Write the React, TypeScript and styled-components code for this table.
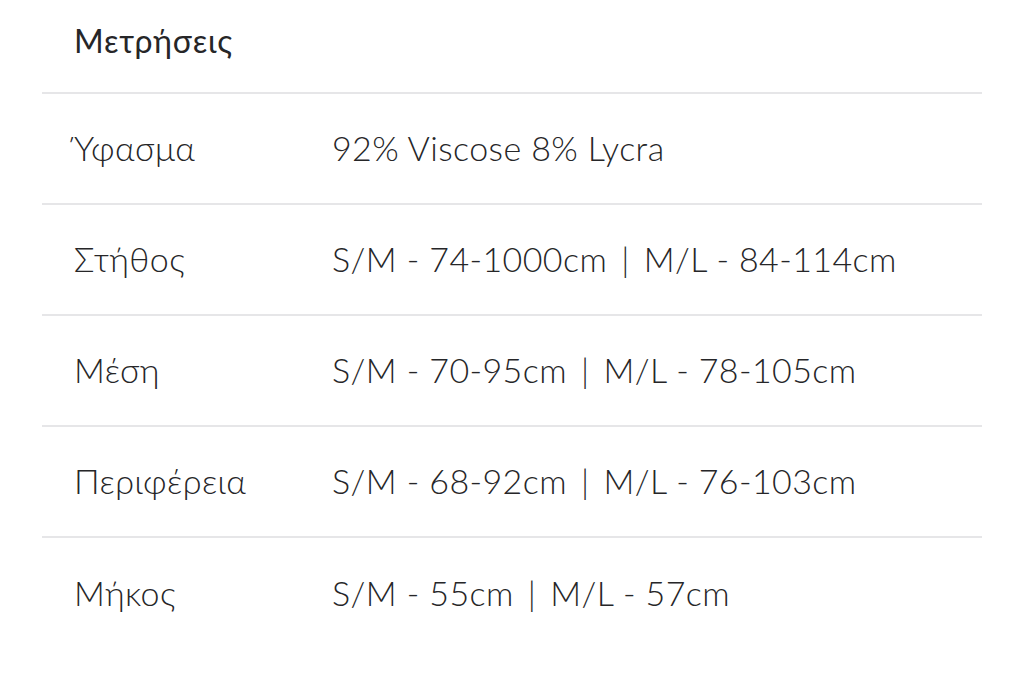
import React from 'react';
import styled, { createGlobalStyle } from 'styled-components';

interface Measurement {
  label: string;
  sizes: string[];
}

const measurements: Measurement[] = [
  { label: 'Ύφασμα', sizes: ['92% Viscose 8% Lycra'] },
  { label: 'Στήθος', sizes: ['S/M - 74-1000cm', 'M/L - 84-114cm'] },
  { label: 'Μέση', sizes: ['S/M - 70-95cm', 'M/L - 78-105cm'] },
  { label: 'Περιφέρεια', sizes: ['S/M - 68-92cm', 'M/L - 76-103cm'] },
  { label: 'Μήκος', sizes: ['S/M - 55cm', 'M/L - 57cm'] },
];

const GlobalStyle = createGlobalStyle`
  html, body {
    margin: 0;
    padding: 0;
    background: #ffffff;
  }
  body {
    font-family: Lato, "Noto Sans", "DejaVu Sans", sans-serif;
    color: #262628;
  }
`;

const Page = styled.div`
  width: 1024px;
  height: 689px;
  padding: 0 42px;
  box-sizing: border-box;
  overflow: hidden;
`;

const Heading = styled.h2`
  margin: 0;
  height: 94px;
  display: flex;
  align-items: center;
  padding: 0 0 11px 32px;
  font-size: 32px;
  font-weight: 400;
  letter-spacing: 0.8px;
  border-bottom: 2px solid #e6e6e8;
  box-sizing: border-box;
`;

const Table = styled.div`
  display: flex;
  flex-direction: column;
`;

const Row = styled.div<{ $last?: boolean }>`
  display: grid;
  grid-template-columns: 258px 1fr;
  align-items: center;
  height: 111px;
  padding: 0 0 2px 32px;
  box-sizing: border-box;
  border-bottom: ${(p) => (p.$last ? 'none' : '2px solid #e6e6e8')};
  font-size: 34px;
  font-weight: 300;
  letter-spacing: 0.4px;
`;

const Label = styled.span`
  white-space: nowrap;
`;

const Value = styled.span`
  white-space: nowrap;
`;

const Divider = styled.span`
  margin: 0 14px;
`;

const App: React.FC = () => {
  return (
    <>
      <GlobalStyle />
      <Page>
        <Heading>Μετρήσεις</Heading>
        <Table>
          {measurements.map((m, i) => (
            <Row key={m.label} $last={i === measurements.length - 1}>
              <Label>{m.label}</Label>
              <Value>
                {m.sizes.map((s, j) => (
                  <React.Fragment key={s}>
                    {j > 0 && <Divider>|</Divider>}
                    {s}
                  </React.Fragment>
                ))}
              </Value>
            </Row>
          ))}
        </Table>
      </Page>
    </>
  );
};

export default App;
